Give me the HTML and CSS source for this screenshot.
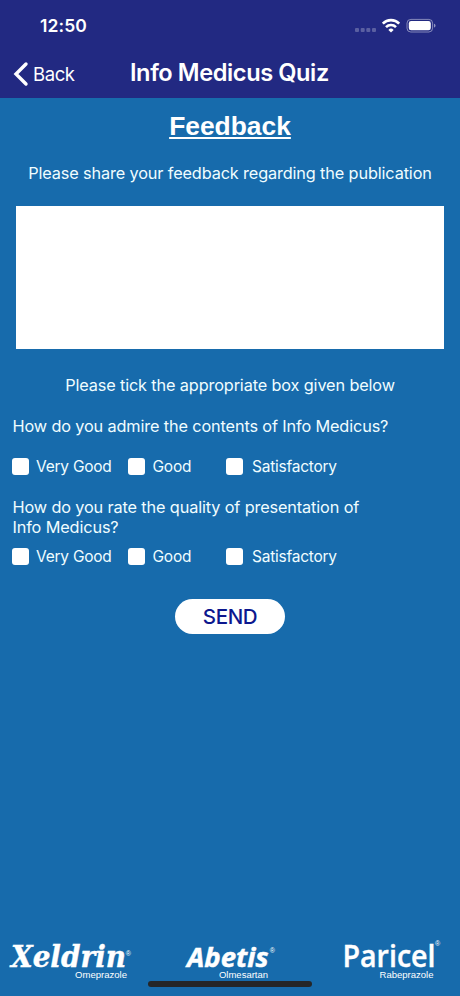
FILE: index.html
```html
<!DOCTYPE html>
<html lang="en">
<head>
<meta charset="utf-8">
<title>Info Medicus Quiz</title>
<link rel="stylesheet" href="styles.css">
</head>
<body>
<div class="screen">
  <header class="header">
    <div class="status">
      <span class="time">12:50</span>
      <svg class="status-icons" width="82" height="16" viewBox="0 0 82 16" fill="#fff">
        <g opacity=".25"><rect x="0" y="10" width="4" height="4" rx="1"/><rect x="5.7" y="10" width="4" height="4" rx="1"/><rect x="11.3" y="10" width="4" height="4" rx="1"/><rect x="17" y="10" width="4" height="4" rx="1"/></g>
        <g fill="none" stroke="#fff" stroke-width="2.6"><path d="M27.8 5.6a11.5 11.5 0 0 1 16.4 0"/><path d="M31 9.1a7 7 0 0 1 10 0"/></g>
        <path d="M33.4 11.9a3.7 3.7 0 0 1 5.2 0L36 14.6z"/>
        <rect x="52" y="1.4" width="25.6" height="12.6" rx="3.8" fill="none" stroke="#fff" stroke-opacity=".45"/>
        <rect x="53.8" y="3.1" width="22" height="9.2" rx="2.3"/>
        <path d="M79 5.7c2 .6 2 3.3 0 3.9z" opacity=".5"/>
      </svg>
    </div>
    <nav class="nav">
      <a class="back"><svg width="16" height="26" viewBox="0 0 16 26"><path d="M13 3 3 13l10 10" fill="none" stroke="#fff" stroke-width="3.4" stroke-linecap="round" stroke-linejoin="miter"/></svg><span>Back</span></a>
      <h1 class="title">Info Medicus Quiz</h1>
    </nav>
  </header>
  <main class="content">
    <h2 class="heading"><span>Feedback</span></h2>
    <p class="intro">Please share your feedback regarding the publication</p>
    <textarea class="message" aria-label="Feedback"></textarea>
    <p class="tick">Please tick the appropriate box given below</p>
    <p class="question q1">How do you admire the contents of Info Medicus?</p>
    <div class="options">
      <label><i class="box"></i><span>Very Good</span></label>
      <label><i class="box"></i><span>Good</span></label>
      <label><i class="box"></i><span>Satisfactory</span></label>
    </div>
    <p class="question q2">How do you rate the quality of presentation of<br>Info Medicus?</p>
    <div class="options">
      <label><i class="box"></i><span>Very Good</span></label>
      <label><i class="box"></i><span>Good</span></label>
      <label><i class="box"></i><span>Satisfactory</span></label>
    </div>
    <button class="send">SEND</button>
  </main>
  <footer class="brands">
    <svg width="153" height="66" viewBox="0 0 153 66">
      <text class="xeldrin" x="11" y="37.3" textLength="115" lengthAdjust="spacingAndGlyphs">Xeldrin</text>
      <text class="reg" x="125.8" y="26">®</text>
      <text class="generic" x="75" y="47.9" textLength="52" lengthAdjust="spacingAndGlyphs">Omeprazole</text>
    </svg>
    <svg width="153" height="66" viewBox="0 0 153 66">
      <text class="abetis" x="34" y="36.9" textLength="81.5" lengthAdjust="spacingAndGlyphs">Abetis</text>
      <text class="reg" x="116.8" y="23.3">®</text>
      <text class="generic" x="66" y="47.9" textLength="49" lengthAdjust="spacingAndGlyphs">Olmesartan</text>
    </svg>
    <svg width="154" height="66" viewBox="0 0 154 66">
      <text class="paricel" x="36.5" y="37" textLength="93" lengthAdjust="spacingAndGlyphs">Paricel</text>
      <text class="reg" x="128.9" y="16">®</text>
      <text class="generic" x="73.5" y="47.9" textLength="54" lengthAdjust="spacingAndGlyphs">Rabeprazole</text>
    </svg>
    <div class="home-bar"></div>
  </footer>
</div>
</body>
</html>
```
FILE: styles.css
```css
* { box-sizing: border-box; }
body { margin: 0; }
h1, h2, p { margin: 0; font-weight: 400; }
.screen {
  width: 460px;
  height: 996px;
  display: flex;
  flex-direction: column;
  background: #176bac;
  color: #f0fdff;
  font-family: Inter, "Liberation Sans", sans-serif;
  overflow: hidden;
}
.header { height: 98px; background: #222982; color: #fff; }
.status {
  height: 50px;
  padding: 1px 23px 0 40px;
  display: flex;
  align-items: center;
  justify-content: space-between;
}
.time { font-size: 17.5px; font-weight: 600; letter-spacing: .1px; }
.nav { height: 48px; display: grid; grid-template-columns: 130px 1fr; align-items: center; }
.back { display: flex; align-items: center; padding-left: 13px; gap: 4px; font-size: 18.5px; letter-spacing: -.4px; }
.title { font-size: 23.6px; line-height: 28px; font-weight: 600; letter-spacing: -.41px; padding-bottom: 3px; white-space: nowrap; }
.content { flex: 1; }
.heading {
  height: 42px;
  padding-top: 13px;
  text-align: center;
  color: #fff;
  font: 700 26.4px/31px "Liberation Sans", sans-serif;
}
.heading span { text-decoration: underline; text-decoration-thickness: 2px; text-underline-offset: 2px; }
.intro, .tick, .question { font-size: 16.3px; line-height: 20px; letter-spacing: -.14px; white-space: nowrap; }
.intro { margin-top: 23px; text-align: center; }
.message {
  display: block;
  width: 428px;
  height: 143px;
  margin: 23px 16px 0;
  border: 0;
  background: #fff;
  resize: none;
}
.tick { margin-top: 26px; text-align: center; }
.question { padding-left: 12.5px; }
.q1 { margin-top: 21px; }
.options {
  display: grid;
  grid-template-columns: 115.5px 98.5px 1fr;
  height: 18px;
  margin: 21px 0 0 12px;
  font-size: 15.5px;
  line-height: 18px;
  letter-spacing: -.24px;
}
.options label { display: flex; align-items: center; gap: 7px; }
.options label + label { gap: 8px; }
.options label:last-child { gap: 9px; }
.options span { padding-top: 1px; }
.box { width: 17px; height: 17px; border-radius: 3px; background: #fff; }
.q2 { margin-top: 22px; }
.q2 + .options { margin-top: 10px; }
.send {
  display: block;
  width: 110px;
  height: 35px;
  margin: 34px auto 0 175px;
  padding: 0;
  border: 0;
  border-radius: 18px;
  background: #fff;
  color: #0c178e;
  font: 500 20.5px/36px Inter, sans-serif;
  letter-spacing: -.4px;
}
.brands { height: 66px; display: flex; position: relative; }
.brands svg { display: block; fill: #fff; }
.xeldrin { font: italic 700 29.5px "DejaVu Serif", serif; stroke: #fff; stroke-width: .4px; }
.abetis { font: italic 700 27.5px "Open Sans", sans-serif; stroke: #fff; stroke-width: .5px; }
.paricel { font: 600 31.2px "Open Sans", sans-serif; stroke: #fff; stroke-width: .4px; }
.reg { font: 7px "Liberation Sans", sans-serif; }
.generic { font: 9.6px "Liberation Sans", sans-serif; }
.home-bar {
  position: absolute;
  left: 148px;
  top: 51px;
  width: 164px;
  height: 6px;
  border-radius: 3px;
  background: #252628;
}
```
